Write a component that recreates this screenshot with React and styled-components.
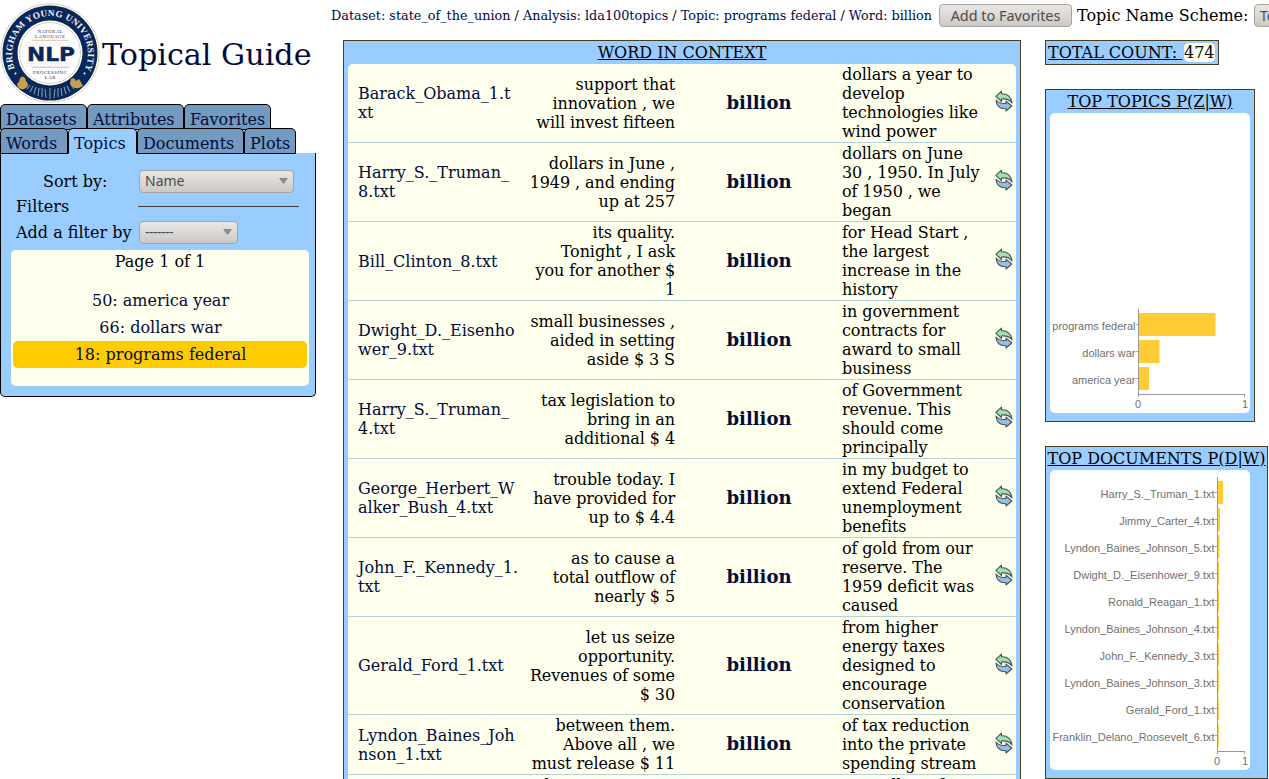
import React from "react";
import styled, { createGlobalStyle } from "styled-components";

const Global = createGlobalStyle`
  html, body { margin: 0; padding: 0; overflow: hidden; background: #fff; }
  body { font: 16px/19px "DejaVu Serif", serif; color: #000; }
  * { box-sizing: border-box; }
`;

const Page = styled.div`
  display: flex;
  width: 1269px;
  height: 779px;
  overflow: hidden;
`;
const Sidebar = styled.aside`
  flex: none;
  width: 316px;
`;
const Brand = styled.header`
  display: flex;
  align-items: center;
  height: 104px;
  padding-top: 2px;
  white-space: nowrap;
`;
const LogoArt = styled.svg`
  flex: none;
  width: 101px;
  height: 102px;
`;
const Title = styled.h1`
  margin: 0 0 0 1px;
  padding-top: 3px;
  font-size: 30.2px;
  line-height: 38px;
  font-weight: 400;
  color: #000b3a;
`;
const TabRow = styled.nav`
  display: flex;
  height: ${(p) => (p.$last ? 25 : 24)}px;
`;
const Tab = styled.a`
  position: relative;
  flex: none;
  width: ${(p) => p.$width}px;
  height: 26px;
  padding: 5px 0 0 5px;
  border: 1px solid #000;
  border-bottom-color: ${(p) => (p.$active ? "#99ccff" : "#000")};
  border-radius: 5px 5px 0 0;
  background: ${(p) => (p.$active ? "#99ccff" : "#739ac0")};
  color: #000b3a;
  white-space: nowrap;
`;
const Panel = styled.section`
  height: 244px;
  padding: 16px 6px 10px 10px;
  border: 1px solid #000;
  border-top: 0;
  border-radius: 0 0 5px 5px;
  background: #99ccff;
`;
const Field = styled.div`
  display: flex;
  align-items: center;
  height: ${(p) => p.$height}px;
`;
const FieldLabel = styled.label`
  width: 127px;
  padding-left: ${(p) => p.$indent}px;
  white-space: nowrap;
`;
const Rule = styled.hr`
  width: 161px;
  height: 1px;
  margin: 0;
  border: 0;
  background: #443c40;
`;
const control = `
  border: 1px solid #a9a39d;
  border-radius: 4px;
  background: linear-gradient(#e9e7e5, #dcd9d6 45%, #cbc8c5);
  color: #4c4c4c;
  font-family: "Noto Sans", sans-serif;
  font-size: 14px;
`;
const Select = styled.div`
  ${control}
  display: flex;
  align-items: center;
  justify-content: space-between;
  flex: none;
  width: ${(p) => p.$width}px;
  height: 23px;
  padding: 0 5px 1px;
  margin-left: 1px;
  letter-spacing: ${(p) => p.$spacing || 0}px;
`;
const Button = styled.button`
  ${control}
  flex: none;
  width: 133px;
  height: 23px;
  padding: 0;
  font-size: 14.4px;
  line-height: 18px;
  white-space: nowrap;
`;
const TopicList = styled.div`
  width: 298px;
  height: 136px;
  margin-top: 6px;
  padding: 2px;
  border-radius: 5px;
  background: #ffffee;
  text-align: center;
`;
const PageCount = styled.div`
  height: 35px;
`;
const Topic = styled.a`
  display: block;
  height: 27px;
  padding-left: 1px;
  line-height: 27px;
  border-radius: 5px;
  color: #000b3a;
  background: ${(p) => (p.$active ? "#ffcc00" : "transparent")};
`;
const Content = styled.main`
  flex: none;
  width: 953px;
  overflow: hidden;
`;
const TopBar = styled.header`
  display: flex;
  align-items: center;
  height: 40px;
  padding: 0 0 9px 15px;
  white-space: nowrap;
`;
const Crumbs = styled.div`
  flex: none;
  width: 608px;
  font-size: 12.8px;
  a { color: #000b4a; }
`;
const SchemeLabel = styled.span`
  flex: none;
  width: 176px;
  margin-left: 5px;
`;
const Columns = styled.div`
  display: flex;
  align-items: flex-start;
  padding-left: 27px;
`;
const Widget = styled.section`
  width: ${(p) => p.$width}px;
  height: ${(p) => p.$height}px;
  padding: 2px 4px 0;
  border: 1px solid #4a3c1c;
  background: #99ccff;
`;
const WidgetTitle = styled.h2`
  margin: 0 -4px;
  height: 21px;
  font-size: 16px;
  line-height: 19px;
  font-weight: 400;
  text-align: center;
  text-decoration: underline;
  white-space: nowrap;
`;
const ContextTable = styled.div`
  border-radius: 5px 5px 0 0;
  background: #ffffee;
  overflow: hidden;
`;
const ContextRow = styled.div`
  display: grid;
  grid-template-columns: 160px 157px 168px 152px 18px;
  align-items: center;
  padding: 1px 0 1px 10px;
  border-bottom: 1px solid #b5d3d9;
  white-space: pre;
`;
const DocLink = styled.a`
  color: #000b3a;
`;
const Context = styled.span`
  text-align: ${(p) => p.$align || "left"};
  letter-spacing: -0.09px;
  margin-left: ${(p) => (p.$align ? 0 : -1)}px;
`;
const Word = styled.a`
  padding-bottom: 2px;
  text-align: center;
  font-size: 18px;
  font-weight: 700;
  color: #000b3a;
`;
const RefreshArt = styled.svg`
  display: block;
  width: 18px;
  height: 22px;
  margin-top: -4px;
`;
const Aside = styled.aside`
  display: flex;
  flex-direction: column;
  gap: 24px;
  margin-left: 24px;
`;
const Count = styled.div`
  width: 174px;
  height: 25px;
  padding: 2px 0 0 2px;
  border: 1px solid #4a3c1c;
  background: #99ccff;
  white-space: pre;
  display: flex;
  u { width: 136px; }
`;
const CountValue = styled.span`
  height: 19px;
  border-radius: 5px;
  background: #ffffee;
`;
const ChartArt = styled.svg`
  display: block;
  border-radius: 5px;
  background: #fff;
  font: 11px "Liberation Sans", sans-serif;
  fill: #707070;
`;

const rows = [
  ["Barack_Obama_1.t\nxt", "support that\ninnovation , we\nwill invest fifteen", "dollars a year to\ndevelop\ntechnologies like\nwind power"],
  ["Harry_S._Truman_\n8.txt", "dollars in June ,\n1949 , and ending\nup at 257", "dollars on June\n30 , 1950. In July\nof 1950 , we\nbegan"],
  ["Bill_Clinton_8.txt", "its quality.\nTonight , I ask\nyou for another $\n1", "for Head Start ,\nthe largest\nincrease in the\nhistory"],
  ["Dwight_D._Eisenho\nwer_9.txt", "small businesses ,\naided in setting\naside $ 3 S", "in government\ncontracts for\naward to small\nbusiness"],
  ["Harry_S._Truman_\n4.txt", "tax legislation to\nbring in an\nadditional $ 4", "of Government\nrevenue. This\nshould come\nprincipally"],
  ["George_Herbert_W\nalker_Bush_4.txt", "trouble today. I\nhave provided for\nup to $ 4.4", "in my budget to\nextend Federal\nunemployment\nbenefits"],
  ["John_F._Kennedy_1.\ntxt", "as to cause a\ntotal outflow of\nnearly $ 5", "of gold from our\nreserve. The\n1959 deficit was\ncaused"],
  ["Gerald_Ford_1.txt", "let us seize\nopportunity.\nRevenues of some\n$ 30", "from higher\nenergy taxes\ndesigned to\nencourage\nconservation"],
  ["Lyndon_Baines_Joh\nnson_1.txt", "between them.\nAbove all , we\nmust release $ 11", "of tax reduction\ninto the private\nspending stream"],
  ["", "have programs ,\n \n ", "annually as for\n \n "],
];

const topics = [
  ["programs federal", 77],
  ["dollars war", 21],
  ["america year", 10.5],
];
const documents = [
  ["Harry_S._Truman_1.txt", 5.5],
  ["Jimmy_Carter_4.txt", 2.5],
  ["Lyndon_Baines_Johnson_5.txt", 2],
  ["Dwight_D._Eisenhower_9.txt", 1.5],
  ["Ronald_Reagan_1.txt", 1.5],
  ["Lyndon_Baines_Johnson_4.txt", 1.5],
  ["John_F._Kennedy_3.txt", 1.5],
  ["Lyndon_Baines_Johnson_3.txt", 1.3],
  ["Gerald_Ford_1.txt", 1.3],
  ["Franklin_Delano_Roosevelt_6.txt", 1.3],
];

function Logo() {
  return (
    <LogoArt viewBox="0 0 101 102">
      <defs>
        <path id="ring" d="M14.800 66.5 A38 38 0 1 1 85.200 66.5" />
      </defs>
      <circle cx="50" cy="51" r="49.3" fill="#fff" stroke="#d8d0b4" strokeWidth="1" />
      <circle cx="50" cy="51" r="47.5" fill="#08285c" />
      <circle cx="50" cy="51" r="32.5" fill="#fff" />
      <circle cx="50" cy="51" r="30.5" fill="none" stroke="#cbbb8b" strokeWidth=".7" />
      <g fill="#e4e6ea" fontFamily="Liberation Sans" fontSize="5.5" textAnchor="middle">
        <text x="50" y="44" textLength="50">101010101001010</text>
        <text x="50" y="65" textLength="48">01011010101010</text>
      </g>
      <path d="M32 38.3H69M32 65.3H69" stroke="#c8b98c" strokeWidth=".8" />
      <g fill="#08285c" textAnchor="middle" fontFamily="Liberation Serif">
        <text x="50" y="31.3" fontSize="4.8" textLength="25">NATURAL</text>
        <text x="50" y="36.2" fontSize="4.8" textLength="30">LANGUAGE</text>
        <text x="50" y="72" fontSize="4.8" textLength="34">PROCESSING</text>
        <text x="50" y="76.7" fontSize="4.8" textLength="11">LAB</text>
        <text x="51" y="59" fontSize="20" fontWeight="700" fontFamily="DejaVu Sans" textLength="48" lengthAdjust="spacingAndGlyphs" stroke="#08285c" strokeWidth=".4">NLP</text>
      </g>
      <text fill="#f3f5f8" fontFamily="Liberation Serif" fontWeight="700" fontSize="9.2">
        <textPath href="#ring" textLength="150">BRIGHAM YOUNG UNIVERSITY</textPath>
      </text>
      <circle cx="15.5" cy="71.5" r="1" fill="#fff" />
      <circle cx="84.5" cy="71.5" r="1" fill="#fff" />
      <path d="M20 76q3-3 5 0l1 3q4 4 0 7q-5 3-8-1q-2-4 1-5zM71 77q4-2 5 2l3-2 4 7-4 2q-6 1-9-4z" fill="#c9a04c" />
      <path d="M27 87l3-4M30 90l3-6M34 92l2-7M38 94l1-8M42 95l0-9M46 96l-1-9M50 97v-11M54 96l1-9M58 95v-9M62 94l-1-8M66 92l-2-7M70 90l-3-6M74 87l-3-4" stroke="#8997a0" strokeWidth="1.1" />
    </LogoArt>
  );
}

function Refresh() {
  return (
    <RefreshArt viewBox="0 0 18 22">
      <g stroke="#47545a" strokeWidth="1.1" strokeLinejoin="round">
        <path d="M.9 6.300L6.500 1.200v2.500c5.500-.3 9.500 2.500 10.600 9.300C14.500 9.500 11 8.500 6.500 9v2.500z" fill="#9fe0ae" />
        <path d="M16.800 16L11 21v-2.300C5.500 19 1.500 16.500 1 10c2.500 3.200 5.600 3.900 10 3.400v-2.300z" fill="#94bfe2" />
      </g>
    </RefreshArt>
  );
}

function Arrow() {
  return (
    <svg width="9" height="7" viewBox="0 0 9 7">
      <path d="M.8 1.500H8.200L4.500 6.500z" fill="#92908d" stroke="#71706d" strokeWidth=".7" />
    </svg>
  );
}

function BarChart({ data, axis, top }) {
  const bottom = top + data.length * 27 + 4;
  return (
    <ChartArt width="200" height="300" viewBox="0 0 200 300">
      {data.map(([label, width], i) => {
        const y = top + 4 + i * 27;
        return (
          <g key={i}>
            <rect x={axis + 1} y={y} width={width - 0.5} height="23" fill="#ffcc33" />
            <path d={`M${axis - 2} ${y + 11.5}h3`} stroke="#aaa" />
            <text x={axis - 2.5} y={y + 17} textAnchor="end">{label}</text>
          </g>
        );
      })}
      <path d={`M${axis + 0.5} ${top}V${bottom + 3}M${axis} ${bottom + 0.5}H195M194.500 ${bottom}v3`} fill="none" stroke="#999" />
      <text x={axis} y={bottom + 13.5} textAnchor="middle">0</text>
      <text x="195" y={bottom + 13.5} textAnchor="middle">1</text>
    </ChartArt>
  );
}

export default function App() {
  return (
    <Page>
      <Global />
      <Sidebar>
        <Brand><Logo /><Title>Topical Guide</Title></Brand>
        <TabRow>
          <Tab $width={87}>Datasets</Tab>
          <Tab $width={97}>Attributes</Tab>
          <Tab $width={87}>Favorites</Tab>
        </TabRow>
        <TabRow $last>
          <Tab $width={68}>Words</Tab>
          <Tab $active $width={69}>Topics</Tab>
          <Tab $width={107}>Documents</Tab>
          <Tab $width={52}>Plots</Tab>
        </TabRow>
        <Panel>
          <Field $height={24}><FieldLabel $indent={32}>Sort by:</FieldLabel><Select $width={155}>Name<Arrow /></Select></Field>
          <Field $height={27}><FieldLabel $indent={5}>Filters</FieldLabel><Rule /></Field>
          <Field $height={24}><FieldLabel $indent={5}>Add a filter by</FieldLabel><Select $width={99} $spacing={-0.5}>-------<Arrow /></Select></Field>
          <TopicList>
            <PageCount>Page 1 of 1</PageCount>
            <Topic>50: america year</Topic>
            <Topic>66: dollars war</Topic>
            <Topic $active>18: programs federal</Topic>
          </TopicList>
        </Panel>
      </Sidebar>
      <Content>
        <TopBar>
          <Crumbs>
            <a>Dataset: state_of_the_union</a> / <a>Analysis: lda100topics</a> / <a>Topic: programs federal</a> / <a>Word: billion</a>
          </Crumbs>
          <Button>Add to Favorites</Button>
          <SchemeLabel>Topic Name Scheme:</SchemeLabel>
          <Select $width={120}>Top 2<Arrow /></Select>
        </TopBar>
        <Columns>
          <Widget $width={678} $height={760}>
            <WidgetTitle>WORD IN CONTEXT</WidgetTitle>
            <ContextTable>
              {rows.map(([doc, left, right], i) => (
                <ContextRow key={i}>
                  <DocLink>{doc}</DocLink>
                  <Context $align="right">{left}</Context>
                  <Word>billion</Word>
                  <Context>{right}</Context>
                  <Refresh />
                </ContextRow>
              ))}
            </ContextTable>
          </Widget>
          <Aside>
            <Count><u>TOTAL COUNT: </u><CountValue>474</CountValue></Count>
            <Widget $width={210} $height={333}>
              <WidgetTitle>TOP TOPICS P(Z|W)</WidgetTitle>
              <BarChart data={topics} axis={88} top={196} />
            </Widget>
            <Widget $width={223} $height={333}>
              <WidgetTitle>TOP DOCUMENTS P(D|W)</WidgetTitle>
              <BarChart data={documents} axis={167} top={7} />
            </Widget>
          </Aside>
        </Columns>
      </Content>
    </Page>
  );
}
